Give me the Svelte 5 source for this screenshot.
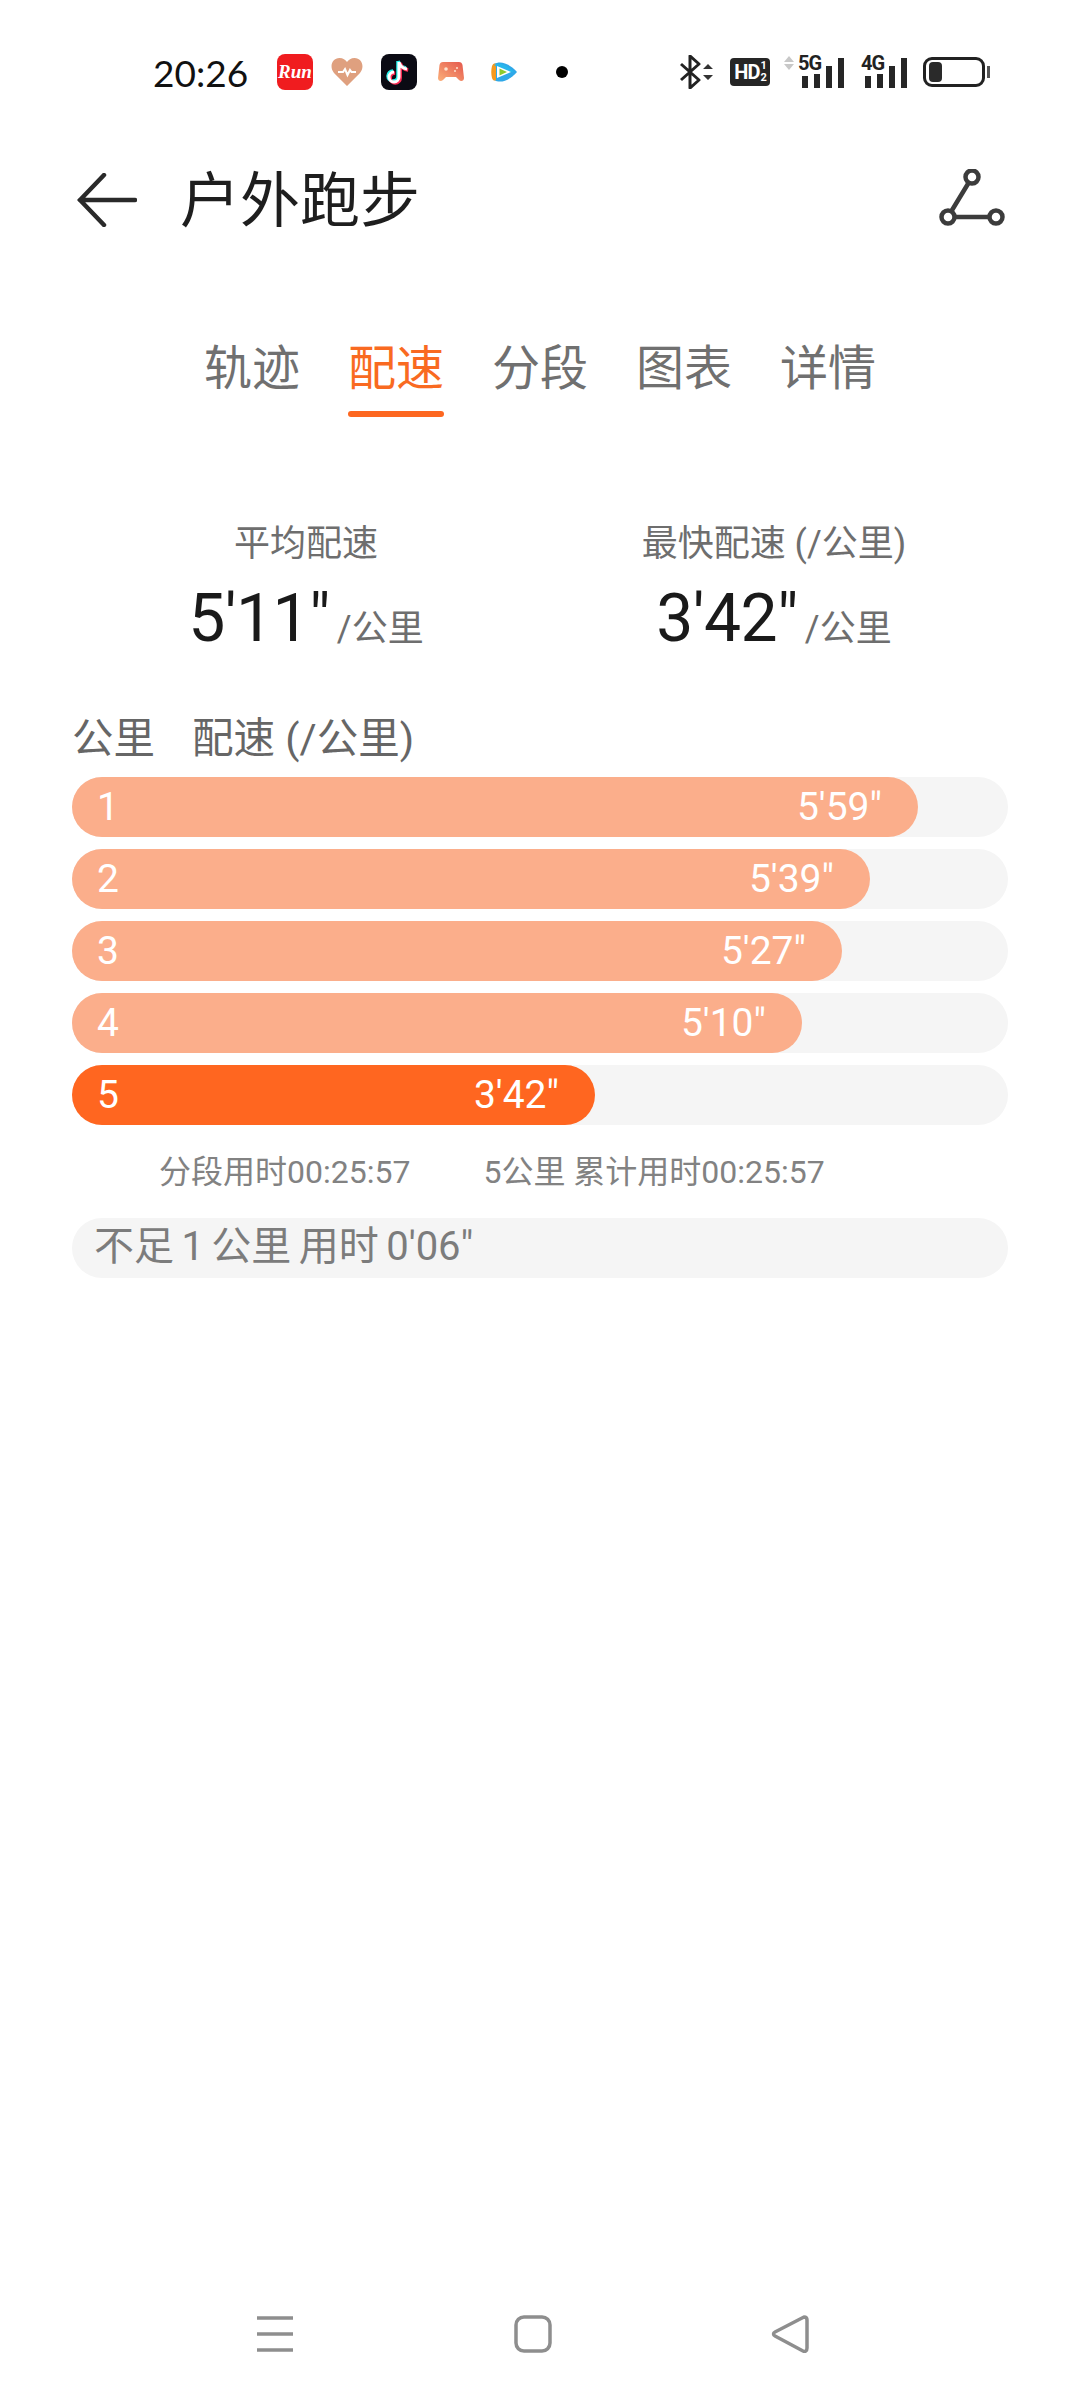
<script lang="ts">
  const tabs = ['轨迹', '配速', '分段', '图表', '详情'];
  const activeTab = '配速';

  const splits = [
    { km: 1, pace: `5'59"`, width: 846 },
    { km: 2, pace: `5'39"`, width: 798 },
    { km: 3, pace: `5'27"`, width: 770 },
    { km: 4, pace: `5'10"`, width: 730 },
    { km: 5, pace: `3'42"`, width: 523, fastest: true }
  ];
</script>

<div class="page">
  <div class="status">
    <span class="time">20:26</span>
    <div class="apps">
      <span class="run-icon">Run</span>
      <svg class="heart" width="32" height="28" viewBox="0 0 32 28">
        <path d="M16 28 L3 15 C-2 9 1 0 8.500 0 C12 0 14.500 2 16 4 C17.500 2 20 0 23.500 0 C31 0 34 9 29 15 Z" fill="#dfa07f" />
        <path d="M7 14 H12 L14 11 L16.500 17 L19 12 L20.500 14 H25" fill="none" stroke="#fff" stroke-width="2" />
      </svg>
      <span class="tiktok">
        <svg width="36" height="36" viewBox="0 0 36 36">
          <path d="M18 8 V23 A5 5 0 1 1 13 18 M18 8 C19 12 22 14.500 26 15" fill="none" stroke="#25f4ee" stroke-width="3.500" transform="translate(-1 -1)" />
          <path d="M18 8 V23 A5 5 0 1 1 13 18 M18 8 C19 12 22 14.500 26 15" fill="none" stroke="#fe2c55" stroke-width="3.500" transform="translate(1.200 1)" />
          <path d="M18 8 V23 A5 5 0 1 1 13 18 M18 8 C19 12 22 14.500 26 15" fill="none" stroke="#fff" stroke-width="3" />
        </svg>
      </span>
      <svg class="game" width="26" height="20" viewBox="0 0 26 20">
        <defs>
          <linearGradient id="gameFill" x1="0" y1="1" x2="1" y2="0">
            <stop offset="0" stop-color="#fbb07a" />
            <stop offset="1" stop-color="#e4574c" />
          </linearGradient>
        </defs>
        <path d="M5 0 H21 C23 0 24 1 24.500 3 L26 16 C26 19 23 20 21 18 L18 15 H8 L5 18 C3 20 0 19 0 16 L1.500 3 C2 1 3 0 5 0 Z" fill="url(#gameFill)" />
        <circle cx="8" cy="7" r="1.800" fill="#fde3cf" />
        <circle cx="19" cy="6" r="1" fill="#fde3cf" />
        <circle cx="17" cy="9" r="1" fill="#fde3cf" />
      </svg>
      <svg class="video" width="26" height="22" viewBox="0 0 26 22">
        <path d="M3 3 C10 -1 19 3 26 11 C19 19 10 23 3 19 Z" fill="#2fa8e8" />
        <path d="M1 5 C0 9 0 13 1 17 C2 20 4 20 5 19 L5 3 C4 2 2 2 1 5 Z" fill="#f79a1e" />
        <path d="M3 4 C9 1 16 4 23 11 L14 11 Z" fill="#27b7ec" />
        <path d="M6 5 L20 11 L6 17 Z" fill="#fff" />
        <path d="M8.500 7.500 L16 11 L8.500 14.500 Z" fill="#8ccb2e" />
      </svg>
      <span class="dot"></span>
    </div>
    <div class="system">
      <svg width="34" height="34" viewBox="0 0 34 34">
        <path d="M1 9 L19 25 L10 33 V1 L19 9 L1 25" fill="none" stroke="#222" stroke-width="3" stroke-linejoin="round" />
        <path d="M23 14 L28 9 L33 14 Z M23 20 L33 20 L28 25 Z" fill="#333" />
      </svg>
      <span class="hd">HD<span class="hd-frac"><i>1</i><i>2</i></span></span>
      <span class="net net-5g">
        <svg class="updown" width="10" height="14" viewBox="0 0 10 14">
          <path d="M0 6 L5 0 L10 6 Z M0 8 H10 L5 14 Z" fill="#c8c8c8" />
        </svg>
        <span class="net-label">5G</span>
        <span class="signal"><i class="s1"></i><i class="s2"></i><i class="s3"></i><i class="s4"></i></span>
      </span>
      <span class="net net-4g">
        <span class="net-label">4G</span>
        <span class="signal"><i class="s1"></i><i class="s2"></i><i class="s3"></i><i class="s4"></i></span>
      </span>
      <span class="battery"><span class="battery-level"></span></span>
      <span class="battery-nub"></span>
    </div>
  </div>

  <header class="toolbar">
    <svg class="back" width="60" height="54" viewBox="0 0 60 54">
      <path d="M27 2 L3 27 L27 52 M3 27 H58" fill="none" stroke="#2a2a2a" stroke-width="4.500" stroke-linecap="round" />
    </svg>
    <h1>户外跑步</h1>
    <svg class="route" width="68" height="62" viewBox="0 0 68 62">
      <circle cx="34" cy="8" r="6.500" fill="none" stroke="#3c3c3c" stroke-width="4.500" />
      <circle cx="10" cy="48" r="6.500" fill="none" stroke="#3c3c3c" stroke-width="4.500" />
      <circle cx="58" cy="48" r="6.500" fill="none" stroke="#3c3c3c" stroke-width="4.500" />
      <path d="M30.500 14 L13.500 42 M17 48 H51" fill="none" stroke="#3c3c3c" stroke-width="4.500" />
    </svg>
  </header>

  <nav class="tabs">
    {#each tabs as tab}
      <span class="tab" class:active={tab === activeTab}>{tab}</span>
    {/each}
  </nav>

  <section class="summary">
    <div class="stat">
      <div class="stat-label">平均配速</div>
      <div class="stat-value">5'11"<small>/公里</small></div>
    </div>
    <div class="stat">
      <div class="stat-label">最快配速 (/公里)</div>
      <div class="stat-value">3'42"<small>/公里</small></div>
    </div>
  </section>

  <div class="table-head">
    <span>公里</span>
    <span>配速 (/公里)</span>
  </div>

  <div class="bars">
    {#each splits as split}
      <div class="track">
        <div class="fill" class:fastest={split.fastest} style="width: {split.width}px">
          <span>{split.km}</span>
          <span>{split.pace}</span>
        </div>
      </div>
    {/each}
  </div>

  <div class="split-info">
    <span>分段用时00:25:57</span>
    <span>5公里 累计用时00:25:57</span>
  </div>

  <div class="remainder">不足 1 公里 用时 0'06"</div>

  <footer class="navbar">
    <svg width="38" height="38" viewBox="0 0 38 38">
      <path d="M1 3 H37 M1 19 H37 M1 35 H37" stroke="#8e8e8e" stroke-width="3.500" />
    </svg>
    <svg width="38" height="38" viewBox="0 0 38 38">
      <rect x="2" y="2" width="34" height="34" rx="8" fill="none" stroke="#8e8e8e" stroke-width="3.500" />
    </svg>
    <svg width="38" height="38" viewBox="0 0 38 38">
      <path d="M33 2 C35 2 36 3 36 5 V33 C36 36 34 37 32 36 L4 21 C2 20 2 18 4 17 Z" fill="none" stroke="#8e8e8e" stroke-width="3.500" stroke-linejoin="round" />
    </svg>
  </footer>
</div>

<style>
  :global(body) {
    margin: 0;
    background: #fff;
  }

  .page {
    width: 1080px;
    height: 2400px;
    display: flex;
    flex-direction: column;
    font-family: Roboto, 'Noto Sans CJK SC', sans-serif;
    color: #666;
    box-sizing: border-box;
  }

  .status {
    height: 144px;
    flex: none;
    display: flex;
    align-items: center;
    padding-left: 153px;
    box-sizing: border-box;
  }

  .time {
    font-family: Lato, sans-serif;
    font-size: 37px;
    color: #111;
    width: 124px;
    line-height: 1;
  }

  .apps {
    display: flex;
    align-items: center;
    width: 403px;
  }

  .run-icon {
    width: 36px;
    height: 36px;
    border-radius: 8px;
    background: #f01c1f;
    color: #fff;
    font: italic bold 19px 'Liberation Serif', serif;
    display: flex;
    align-items: center;
    justify-content: center;
    margin-right: 18px;
  }

  .heart {
    margin-right: 18px;
  }

  .tiktok {
    width: 36px;
    height: 36px;
    border-radius: 8px;
    background: #0b0b14;
    display: block;
    margin-right: 21px;
  }

  .tiktok svg {
    display: block;
  }

  .game {
    margin-right: 27px;
  }

  .video {
    margin-right: 39px;
  }

  .dot {
    width: 12px;
    height: 12px;
    border-radius: 50%;
    background: #000;
  }

  .system {
    display: flex;
    align-items: center;
  }

  .hd {
    width: 40px;
    height: 28px;
    margin-left: 16px;
    border-radius: 4px;
    background: #262626;
    color: #fff;
    font: bold 20px/28px Roboto, sans-serif;
    display: flex;
    justify-content: center;
    letter-spacing: -1px;
  }

  .hd-frac {
    display: flex;
    flex-direction: column;
    font-size: 11px;
    line-height: 12px;
    margin-left: 1px;
    padding-top: 2px;
  }

  .hd-frac i {
    font-style: normal;
  }

  .net {
    position: relative;
    display: block;
    height: 32px;
    color: #222;
  }

  .net-5g {
    width: 60px;
    margin-left: 14px;
  }

  .net-4g {
    width: 46px;
    margin-left: 17px;
  }

  .updown {
    position: absolute;
    left: 0;
    top: 0;
  }

  .net-label {
    position: absolute;
    top: -2px;
    font: bold 20px/18px Roboto, sans-serif;
    letter-spacing: -1px;
  }

  .net-5g .net-label {
    left: 14px;
  }

  .net-4g .net-label {
    left: 0;
  }

  .signal {
    position: absolute;
    right: 0;
    bottom: 0;
    display: flex;
    align-items: flex-end;
    gap: 6px;
  }

  .signal i {
    display: block;
    width: 6px;
    background: #262626;
  }

  .s1 {
    height: 12px;
  }

  .s2 {
    height: 14px;
  }

  .s3 {
    height: 22px;
  }

  .s4 {
    height: 30px;
  }

  .battery {
    width: 62px;
    height: 30px;
    margin-left: 16px;
    box-sizing: border-box;
    border: 3px solid #222;
    border-radius: 9px;
    padding: 2px 3px;
    display: block;
  }

  .battery-level {
    display: block;
    width: 13px;
    height: 100%;
    border-radius: 4px;
    background: #2a2a2a;
  }

  .battery-nub {
    width: 3px;
    height: 12px;
    margin-left: 2px;
    background: #555;
  }

  .toolbar {
    height: 112px;
    flex: none;
    display: flex;
    align-items: center;
    padding: 0 72px 0 77px;
    box-sizing: border-box;
  }

  .toolbar h1 {
    margin: 4px 0 0 43px;
    font-size: 60px;
    font-weight: 400;
    line-height: 1;
    color: #1e1e1e;
  }

  .route {
    margin-left: auto;
    margin-right: 2px;
  }

  .tabs {
    display: flex;
    justify-content: center;
    gap: 48px;
    margin-top: 81px;
    flex: none;
  }

  .tab {
    font-size: 48px;
    line-height: 64px;
    height: 110px;
    color: #707070;
    box-sizing: border-box;
    position: relative;
  }

  .tab.active {
    color: #f96a21;
  }

  .tab.active::after {
    content: '';
    position: absolute;
    left: 0;
    right: 0;
    top: 74px;
    height: 6px;
    border-radius: 3px;
    background: #fd6720;
  }

  .summary {
    display: grid;
    grid-template-columns: 1fr 1fr;
    padding: 0 72px;
    margin-top: 72px;
  }

  .stat {
    text-align: center;
  }

  .stat-label {
    font-size: 36px;
    line-height: 50px;
    color: #6e6e6e;
  }

  .stat-value {
    font-size: 66px;
    line-height: 80px;
    margin-top: 10px;
    color: #1a1a1a;
    letter-spacing: -0.500px;
  }

  .stat-value small {
    font-size: 36px;
    color: #6e6e6e;
    margin-left: 7px;
    letter-spacing: 0;
  }

  .table-head {
    display: flex;
    gap: 37px;
    padding: 0 72px;
    margin-top: 42px;
    font-size: 41.500px;
    line-height: 56px;
    color: #666;
  }

  .bars {
    display: flex;
    flex-direction: column;
    gap: 12px;
    padding: 0 72px;
    margin-top: 10px;
  }

  .track {
    height: 60px;
    border-radius: 30px;
    background: #f5f5f5;
  }

  .fill {
    height: 100%;
    border-radius: 30px;
    background: #fbae8b;
    color: #fff;
    display: flex;
    justify-content: space-between;
    align-items: center;
    box-sizing: border-box;
    padding: 0 36px 0 25px;
    font-size: 39px;
  }

  .fill.fastest {
    background: #ff6620;
  }

  .split-info {
    display: flex;
    gap: 73px;
    padding-left: 159px;
    margin-top: 27px;
    font-size: 32px;
    line-height: 40px;
    color: #828282;
  }

  .remainder {
    height: 60px;
    margin: 26px 72px 0;
    padding-left: 22px;
    border-radius: 30px;
    background: #f5f5f5;
    font-size: 40px;
    line-height: 58px;
    color: #7c7c7c;
    word-spacing: -2.500px;
  }

  .navbar {
    margin-top: auto;
    display: flex;
    justify-content: space-between;
    padding: 0 271px 47px 256px;
  }
</style>
